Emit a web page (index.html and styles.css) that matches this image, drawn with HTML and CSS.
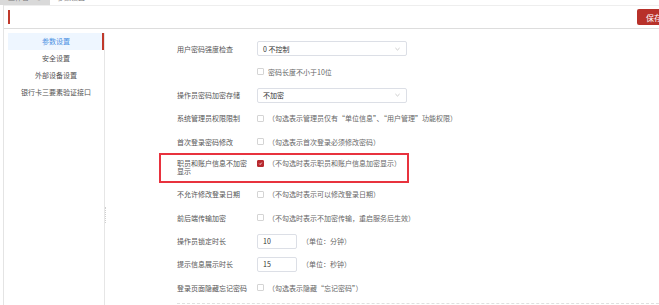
FILE: index.html
```html
<!DOCTYPE html>
<html lang="zh-CN">
<head>
    <meta charset="UTF-8">
    <meta name="viewport" content="width=device-width, initial-scale=1.0">
    <title>参数设置</title>
    <link rel="stylesheet" href="styles.css">
</head>
<body>
    <div class="tabs">
        <div class="tab tab-home">工作台 <span class="tab-close">⊗</span></div>
        <div class="tab tab-active">参数设置 <span class="tab-close">×</span></div>
    </div>
    <div class="page">
        <div class="toolbar">
            <span class="marker"></span>
            <button class="btn-save">保存</button>
        </div>
        <div class="main">
            <ul class="menu">
                <li class="active">参数设置</li>
                <li>安全设置</li>
                <li>外部设备设置</li>
                <li>银行卡三要素验证接口</li>
            </ul>
            <div class="splitter"></div>
            <form class="form">
                <div class="row">
                    <label class="label">用户密码强度检查</label>
                    <div class="select">0 不控制<svg class="arrow" viewBox="0 0 6 4"><polyline points="0.5,0.8 3,3.2 5.5,0.8"/></svg></div>
                </div>
                <div class="row">
                    <span class="label"></span>
                    <span class="checkbox"></span>
                    <span class="hint">密码长度不小于10位</span>
                </div>
                <div class="row">
                    <label class="label">操作员密码加密存储</label>
                    <div class="select">不加密<svg class="arrow" viewBox="0 0 6 4"><polyline points="0.5,0.8 3,3.2 5.5,0.8"/></svg></div>
                </div>
                <div class="row">
                    <label class="label">系统管理员权限限制</label>
                    <span class="checkbox"></span>
                    <span class="hint">（勾选表示管理员仅有“单位信息”、“用户管理”功能权限）</span>
                </div>
                <div class="row">
                    <label class="label">首次登录密码修改</label>
                    <span class="checkbox"></span>
                    <span class="hint">（勾选表示首次登录必须修改密码）</span>
                </div>
                <div class="row row-mark">
                    <label class="label">职员和账户信息不加密显示</label>
                    <div class="control">
                        <span class="checkbox checked"><svg viewBox="0 0 8 8"><polyline points="2,4.2 3.4,5.6 6,2.6"/></svg></span>
                        <span class="hint">（不勾选时表示职员和账户信息加密显示）</span>
                    </div>
                </div>
                <div class="row">
                    <label class="label">不允许修改登录日期</label>
                    <span class="checkbox"></span>
                    <span class="hint">（不勾选时表示可以修改登录日期）</span>
                </div>
                <div class="row">
                    <label class="label">前后端传输加密</label>
                    <span class="checkbox"></span>
                    <span class="hint">（不勾选时表示不加密传输，重启服务后生效）</span>
                </div>
                <div class="row">
                    <label class="label">操作员锁定时长</label>
                    <div class="input">10</div>
                    <span class="unit">（单位：分钟）</span>
                </div>
                <div class="row">
                    <label class="label">提示信息展示时长</label>
                    <div class="input">15</div>
                    <span class="unit">（单位：秒钟）</span>
                </div>
                <div class="row">
                    <label class="label">登录页面隐藏忘记密码</label>
                    <span class="checkbox"></span>
                    <span class="hint">（勾选表示隐藏“忘记密码”）</span>
                </div>
                <div class="dash"></div>
            </form>
        </div>
    </div>
</body>
</html>
```

FILE: styles.css
```css
body {
    margin: 0;
    height: 305px;
    overflow: hidden;
    background-color: #ffffff;
    font-family: "Noto Sans CJK SC", "Noto Sans", sans-serif;
    font-size: 7px;
    color: #555;
}

.tabs {
    display: flex;
    height: 16px;
    margin-top: -11px;
    line-height: 16px;
    color: #777;
    white-space: nowrap;
    overflow: hidden;
}

.tab {
    overflow: hidden;
}

.tab-home {
    width: 42px;
    padding-left: 8px;
    background-color: #d9d9d9;
}

.tab-active {
    width: 48px;
    padding-left: 7px;
    background-color: #ffffff;
}

.tab-close {
    margin-left: 5px;
    color: #aaa;
}

.page {
    margin-left: 3px;
    border-left: 1px solid #e4e4e4;
}

.toolbar {
    display: flex;
    align-items: center;
    justify-content: space-between;
    height: 22px;
    padding-left: 4px;
    border-top: 1px solid #eeeeee;
    border-bottom: 1px solid #dddddd;
}

.marker {
    width: 2px;
    height: 14px;
    background-color: #c0392b;
}

.btn-save {
    width: 34px;
    height: 16px;
    margin-right: -12px;
    padding: 0;
    border: none;
    border-radius: 2px;
    background-color: #b8312a;
    color: #fff;
    font-family: "Noto Sans CJK SC", sans-serif;
    font-size: 8px;
}

.main {
    display: flex;
    position: relative;
    height: 276px;
}

.menu {
    list-style: none;
    width: 96px;
    margin: 4px 0 0 4px;
    padding: 0;
    border-right: 1px solid #e6e6e6;
}

.menu li {
    height: 17px;
    line-height: 17px;
    text-align: center;
}

.menu li.active {
    background-color: #eef6ff;
    color: #4a90e2;
    box-shadow: inset -2px 0 0 #c0392b;
}

.splitter {
    position: absolute;
    left: 101px;
    top: 178px;
    width: 1px;
    height: 16px;
    border-left: 1px dotted #d0d0d0;
}

.form {
    flex: 1;
    padding: 12px 0 0 72px;
}

.row {
    display: flex;
    align-items: center;
    height: 15px;
    margin-bottom: 8.3px;
}

.label {
    flex: none;
    width: 74px;
    padding-right: 6px;
    color: #555;
}

.select {
    display: flex;
    align-items: center;
    justify-content: space-between;
    box-sizing: border-box;
    width: 150px;
    height: 15px;
    padding: 0 6px 0 5px;
    border: 1px solid #dcdfe6;
    border-radius: 2px;
    color: #333;
}

.arrow {
    width: 5px;
    height: 4px;
    fill: none;
    stroke: #b0b0b0;
    stroke-width: 0.8;
}

.checkbox {
    flex: none;
    box-sizing: border-box;
    width: 7px;
    height: 7px;
    border: 1px solid #d4d4d4;
    border-radius: 1px;
    background-color: #fff;
}

.checkbox.checked {
    border-color: #b8292f;
    background-color: #b8292f;
}

.checkbox svg {
    display: block;
    width: 5px;
    height: 5px;
    fill: none;
    stroke: #fff;
    stroke-width: 1.3;
}

.hint {
    margin-left: 4px;
    color: #666;
    white-space: nowrap;
}

.input {
    box-sizing: border-box;
    width: 40px;
    height: 15px;
    padding-left: 5px;
    line-height: 13px;
    border: 1px solid #dcdfe6;
    border-radius: 2px;
    color: #333;
}

.unit {
    margin-left: 5px;
    color: #666;
}

.row-mark {
    align-items: flex-start;
    box-sizing: border-box;
    width: 250px;
    height: 30px;
    margin: -4.5px 0 4px -18px;
    padding: 4px 0 0 16px;
    border: 2px solid #e8323e;
}

.row-mark .label {
    line-height: 8px;
}

.control {
    display: flex;
    align-items: center;
    margin-top: 1px;
    height: 7px;
}

.dash {
    margin-top: 6px;
    border-top: 1px dashed #e0e0e0;
}
```
